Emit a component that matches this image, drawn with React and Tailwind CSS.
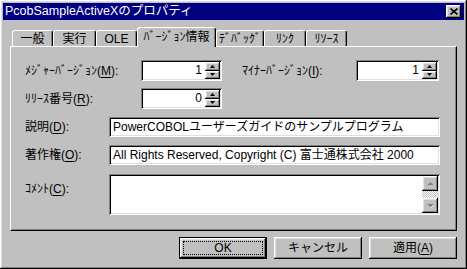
import React from "react";

const raised =
  "shadow-[inset_-1px_-1px_#000,inset_1px_1px_#fff,inset_-2px_-2px_#808080,inset_2px_2px_#dfdfdf]";
const sunken =
  "shadow-[inset_1px_1px_#808080,inset_-1px_-1px_#fff,inset_2px_2px_#000,inset_-2px_-2px_#dfdfdf]";

const U = ({ children }) => <span className="underline underline-offset-2">{children}</span>;

const Arrow = ({ up, disabled }) => (
  <svg width="7" height="4" viewBox="0 0 7 4" className="block">
    {disabled && (
      <polygon
        points={up ? "1,4 4,1 7,4" : "1,1 7,1 4,4"}
        fill="#fff"
      />
    )}
    <polygon
      points={up ? "0,3.5 3.5,0 7,3.5" : "0,0 7,0 3.5,3.5"}
      fill={disabled ? "#808080" : "#000"}
    />
  </svg>
);

const SpinButton = ({ up }) => (
  <div className={`flex-1 flex items-center justify-center bg-[#c0c0c0] ${raised}`}>
    <svg width="5" height="3" viewBox="0 0 5 3" className="block">
      <polygon points={up ? "0,3 2.5,0 5,3" : "0,0 5,0 2.5,3"} fill="#000" />
    </svg>
  </div>
);

const Spin = ({ value, w }) => (
  <div className={`${w} h-[21px] bg-white p-[2px] flex ${sunken}`}>
    <div className="flex-1 text-right pr-[3px] leading-[17px]">{value}</div>
    <div className="w-[15px] flex flex-col">
      <SpinButton up />
      <SpinButton />
    </div>
  </div>
);

const Tab = ({ label, w, active }) => (
  <div
    className={`${w} flex items-center justify-center rounded-t-[3px] border-t border-l border-white bg-[#c0c0c0] shadow-[inset_-1px_0_#808080] ${
      active
        ? "h-[20px] -mb-[1px] z-10 border-r border-r-black pb-[2px]"
        : "h-[16px] border-r border-r-black"
    }`}
  >
    {label}
  </div>
);

const Button = ({ children, isDefault }) => (
  <div
    className={`w-[88px] h-[22px] ${
      isDefault ? "border border-black" : ""
    }`}
  >
    <div className={`w-full h-full bg-[#c0c0c0] ${raised} flex items-center justify-center p-[3px]`}>
      <div
        className={`w-full h-full flex items-center justify-center ${
          isDefault ? "border border-dotted border-black" : ""
        }`}
      >
        {children}
      </div>
    </div>
  </div>
);

export default function App() {
  return (
    <div
      className={`w-[467px] h-[269px] bg-[#c0c0c0] p-[3px] flex flex-col text-[12px] text-black ${raised}`}
      style={{ fontFamily: '"Liberation Sans", "Noto Sans CJK JP", sans-serif' }}
    >
      {/* Title bar */}
      <div className="h-[17px] bg-[#000080] flex items-center justify-between pl-[2px] pr-[3px]">
        <span className="text-white text-[12.5px] leading-none">PcobSampleActiveXのプロパティ</span>
        <div className={`w-[15px] h-[13px] bg-[#c0c0c0] flex items-center justify-center ${raised}`}>
          <svg width="8" height="7" viewBox="0 0 8 7">
            <path d="M0.5 0.5 L7.5 6.5 M7.5 0.5 L0.5 6.5" stroke="#000" strokeWidth="1.6" />
          </svg>
        </div>
      </div>

      {/* Body */}
      <div className="flex-1 flex flex-col px-[7px] pt-[7px]">
        {/* Tabs */}
        <div className="h-[19px] flex items-end pl-[2px]">
          <Tab label="一般" w="w-[41px]" />
          <Tab label="実行" w="w-[43px]" />
          <Tab label="OLE" w="w-[41px]" />
          <Tab label="ﾊﾞｰｼﾞｮﾝ情報" w="w-[79px]" active />
          <Tab label="ﾃﾞﾊﾞｯｸﾞ" w="w-[48px]" />
          <Tab label="ﾘﾝｸ" w="w-[42px]" />
          <Tab label="ﾘｿｰｽ" w="w-[41px]" />
        </div>

        {/* Panel */}
        <div
          className={`h-[185px] border-t border-l border-white border-r border-b border-r-black border-b-black shadow-[inset_-1px_-1px_#808080] pt-[13px] pl-[14px] flex flex-col`}
        >
          <div className="h-[21px] flex items-center">
            <span className="w-[116px]">
              ﾒｼﾞｬｰﾊﾞｰｼﾞｮﾝ(<U>M</U>):
            </span>
            <Spin value="1" w="w-[81px]" />
            <span className="w-[114px] ml-[20px]">
              ﾏｲﾅｰﾊﾞｰｼﾞｮﾝ(<U>I</U>):
            </span>
            <Spin value="1" w="w-[83px]" />
          </div>

          <div className="h-[21px] mt-[7px] flex items-center">
            <span className="w-[116px]">
              ﾘﾘｰｽ番号(<U>R</U>):
            </span>
            <Spin value="0" w="w-[81px]" />
          </div>

          <div className="h-[20px] mt-[8px] flex items-center">
            <span className="w-[84px]">
              説明(<U>D</U>):
            </span>
            <div className={`w-[331px] h-full bg-white ${sunken} px-[4px] leading-[20px]`}>
              PowerCOBOLユーザーズガイドのサンプルプログラム
            </div>
          </div>

          <div className="h-[20px] mt-[8px] flex items-center">
            <span className="w-[84px]">
              著作権(<U>O</U>):
            </span>
            <div className={`w-[331px] h-full bg-white ${sunken} px-[4px] leading-[20px]`}>
              All Rights Reserved, Copyright (C) 富士通株式会社 2000
            </div>
          </div>

          <div className="h-[41px] mt-[9px] flex items-start">
            <span className="w-[84px] mt-[6px]">
              ｺﾒﾝﾄ(<U>C</U>):
            </span>
            <div className={`w-[331px] h-full bg-white ${sunken} p-[2px] flex justify-end`}>
              <div className="w-[16px] h-full flex flex-col">
                <div className={`h-[15px] bg-[#c0c0c0] ${raised} flex items-center justify-center`}>
                  <Arrow up disabled />
                </div>
                <div className="flex-1 bg-[repeating-conic-gradient(#c0c0c0_0_25%,#fff_0_50%)] bg-[length:2px_2px]" />
                <div className={`h-[15px] bg-[#c0c0c0] ${raised} flex items-center justify-center`}>
                  <Arrow disabled />
                </div>
              </div>
            </div>
          </div>
        </div>

        {/* Buttons */}
        <div className="mt-[6px] flex justify-end gap-[7px] pr-[0px]">
          <Button isDefault>OK</Button>
          <Button>キャンセル</Button>
          <Button>
            適用(<U>A</U>)
          </Button>
        </div>
      </div>
    </div>
  );
}
